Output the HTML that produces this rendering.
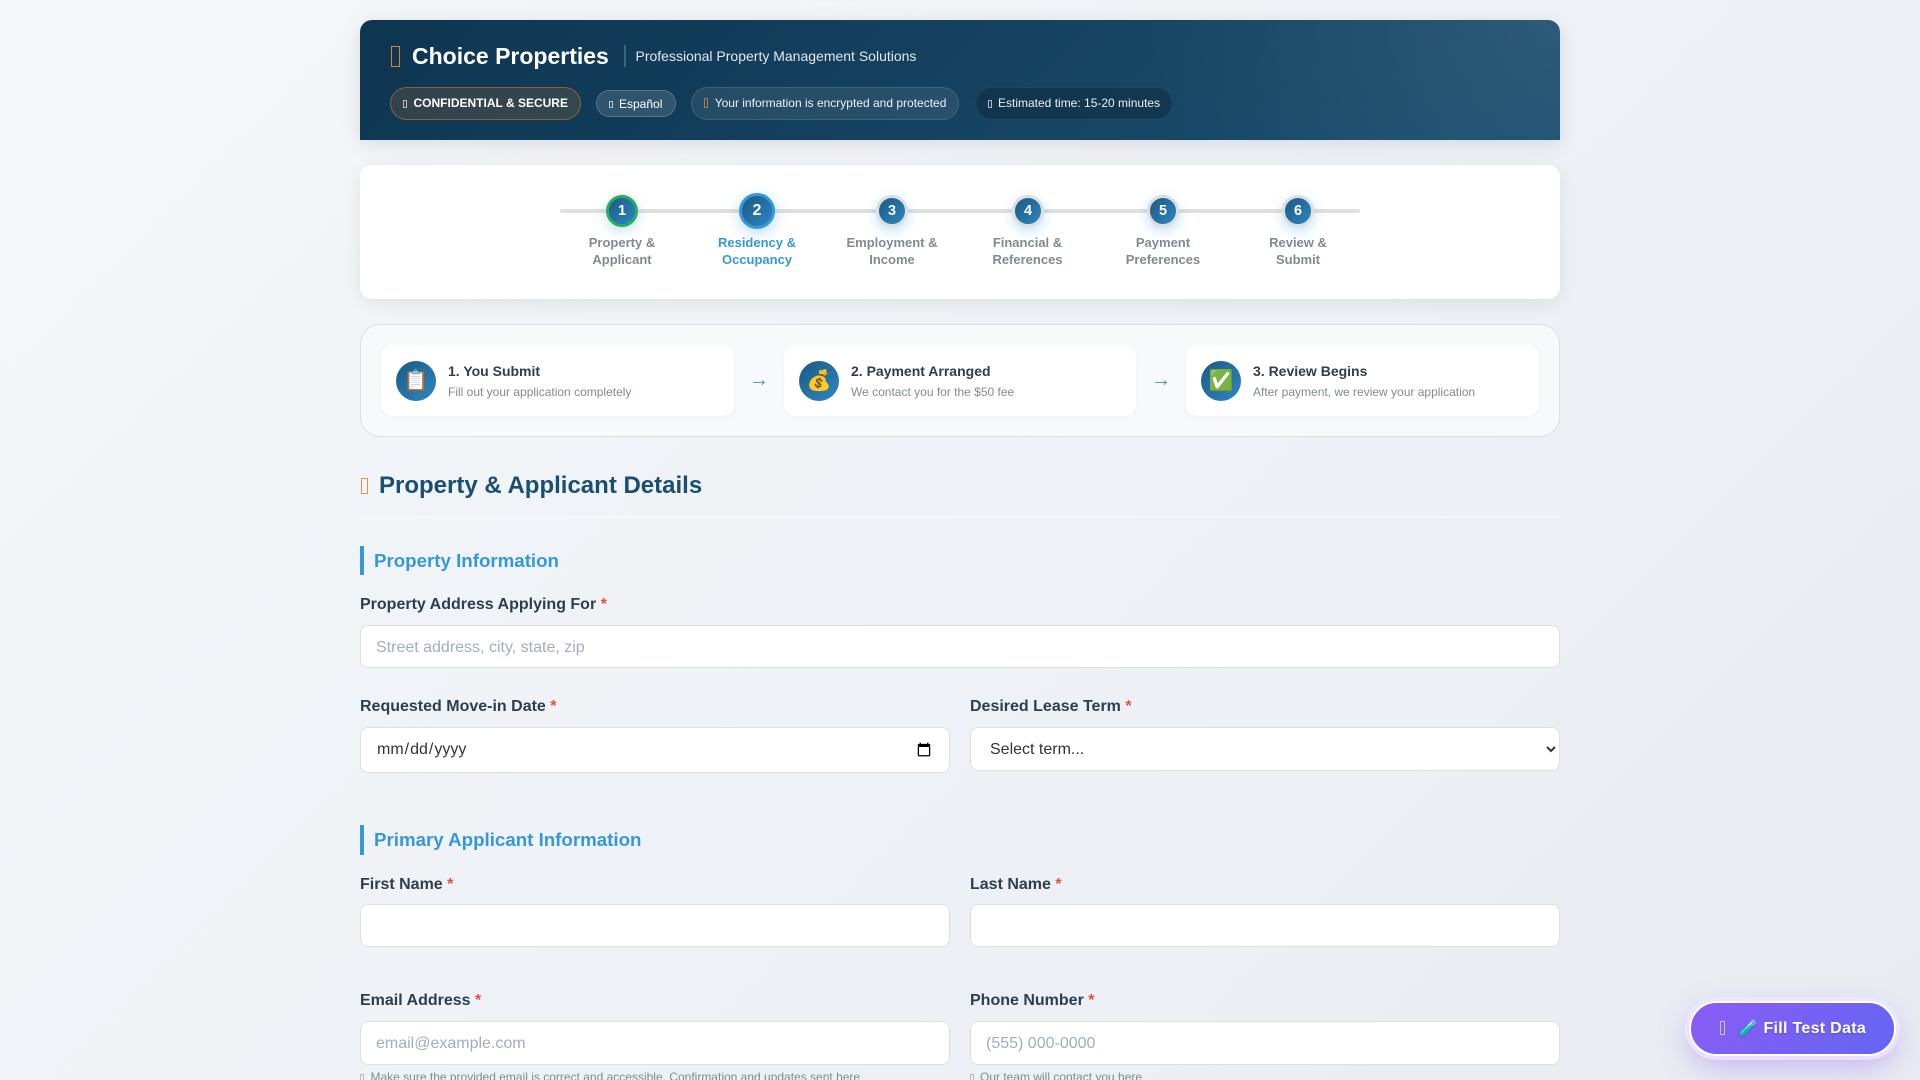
<!DOCTYPE html>
<html lang="en"><head><meta charset="utf-8"><title>Choice Properties</title>
<style>
*{box-sizing:border-box}
html,body{margin:0;padding:0;width:1920px;height:1080px;overflow:hidden}
body{position:relative;background:linear-gradient(135deg,#f5f7fa 0%,#e8ecf1 100%);font-family:"Liberation Sans",sans-serif;color:#2c3e50}
.a{position:absolute;white-space:nowrap}
.header{left:360px;top:20px;width:1200px;height:120px;border-radius:12px 12px 0 0;background:radial-gradient(ellipse 420px 260px at 100% 0,rgba(255,255,255,.08),rgba(255,255,255,0) 100%),linear-gradient(135deg,#0d3550 0%,#1c4f70 100%);box-shadow:0 4px 20px rgba(0,0,0,.1)}
.pill{border-radius:20px;border:1px solid rgba(255,255,255,.15);background:rgba(255,255,255,.1)}
.t{color:#fff;font-size:12px;line-height:16px}
.x{position:absolute;border:1px solid currentColor}
.card{left:360px;top:165px;width:1200px;height:134px;background:#fff;border-radius:12px;box-shadow:0 4px 20px rgba(0,0,0,.08)}
.line{left:560px;top:209px;width:800px;height:4px;background:#dfdfdf;border-radius:2px}
.num{width:32px;height:32px;top:195px;border-radius:50%;border:3px solid #dedede;background:linear-gradient(135deg,#1a5a85,#2e86c1);color:#fff;font-weight:700;font-size:14.4px;line-height:26px;text-align:center;box-shadow:0 4px 12px rgba(52,152,219,.3)}
.lbl{top:234px;width:124px;font-size:13px;line-height:17px;font-weight:700;color:#7f8c8d;text-align:center;white-space:normal}
.proc{left:360px;top:324px;width:1200px;height:113px;background:#f8f9fb;border:1px solid #dcdfe3;border-radius:20px}
.pc{top:345px;height:71px;background:#fff;border-radius:12px;box-shadow:0 2px 8px rgba(0,0,0,.03)}
.pi{top:361px;width:40px;height:40px;border-radius:50%;background:linear-gradient(135deg,#1a5a85,#2e86c1);font-size:20px;line-height:40px;text-align:center}
.pt{top:363px;font-size:14px;line-height:16px;font-weight:700;color:#2c3e50}
.pd{top:385px;font-size:12px;line-height:14px;color:#7f8c8d}
.arr{top:367px;font-size:20px;line-height:26px;color:#3498db}
.bar{left:360px;width:4px;background:#3498db}
.sub{left:374px;font-size:18.72px;line-height:24px;font-weight:700;color:#3498db}
label{position:absolute;white-space:nowrap;font-size:16px;line-height:20px;font-weight:700;color:#2c3e50}
label b{color:#e74c3c}
input,select{position:absolute;margin:0;background:#fff;border:1.5px solid #dfdfdf;border-radius:8px;font-family:"Liberation Sans",sans-serif;font-size:16px;padding:0 15px;color:#333;outline:none}
input::placeholder{color:#a0aec0;opacity:1}
.h{font-size:12px;line-height:14px;color:#7f8c8d}
.btn{left:1689px;top:1001px;width:207px;height:55px;border-radius:28px;border:2px solid #fff;background:linear-gradient(135deg,#8b5cf6,#6366f1);box-shadow:0 0 0 4px rgba(240,232,255,.75),0 10px 30px rgba(139,92,246,.4)}
</style></head><body>

<div class="a header"></div>
<div class="x" style="left:391px;top:46px;width:9px;height:21px;color:#e67e22"></div>
<div class="a" style="left:412px;top:42px;font-size:23px;line-height:28px;font-weight:700;color:#fff">Choice Properties</div>
<div class="a" style="left:624px;top:45px;width:2px;height:22px;background:rgba(255,255,255,.2)"></div>
<div class="a" style="left:635.5px;top:47px;font-size:14px;line-height:18px;color:rgba(255,255,255,.88)">Professional Property Management Solutions</div>

<div class="a pill" style="left:390px;top:87px;width:191px;height:33px;background:rgba(230,126,34,.17);border-color:rgba(230,126,34,.5)"></div>
<div class="x" style="left:403px;top:100px;width:4px;height:8px;color:#b8bcbd"></div>
<div class="a t" style="left:413.5px;top:95px;font-weight:700">CONFIDENTIAL &amp; SECURE</div>

<div class="a pill" style="left:596px;top:90px;width:80px;height:27px;background:rgba(255,255,255,.13);border-color:rgba(255,255,255,.2)"></div>
<div class="x" style="left:609px;top:101px;width:4px;height:7px;color:#b5c0c8"></div>
<div class="a t" style="left:619px;top:96px">Español</div>

<div class="a pill" style="left:691px;top:87px;width:268px;height:33px;background:rgba(255,255,255,.08);border-color:rgba(255,255,255,.12)"></div>
<div class="x" style="left:704px;top:98px;width:4px;height:10px;color:#b27a4a"></div>
<div class="a t" style="left:714.7px;top:95px;color:rgba(255,255,255,.92)">Your information is encrypted and protected</div>

<div class="a pill" style="left:974.5px;top:87px;width:198px;height:33px;background:rgba(0,0,0,.2);border-color:rgba(255,255,255,.08)"></div>
<div class="x" style="left:988px;top:100px;width:4px;height:8px;color:#b0bac0"></div>
<div class="a t" style="left:998px;top:95px;color:rgba(255,255,255,.92)">Estimated time: 15-20 minutes</div>

<div class="a card"></div>
<div class="a line"></div>
<div class="a num" style="left:606px;border-color:#27ae60">1</div>
<div class="a num" style="left:739px;top:193px;width:36px;height:36px;border-color:#3498db;font-size:16px;line-height:30px;box-shadow:0 4px 14px rgba(52,152,219,.35)">2</div>
<div class="a num" style="left:876px">3</div>
<div class="a num" style="left:1012px">4</div>
<div class="a num" style="left:1147px">5</div>
<div class="a num" style="left:1282px">6</div>
<div class="a lbl" style="left:560px">Property &amp;<br>Applicant</div>
<div class="a lbl" style="left:695px;color:#3498db">Residency &amp;<br>Occupancy</div>
<div class="a lbl" style="left:830px">Employment &amp;<br>Income</div>
<div class="a lbl" style="left:965.5px">Financial &amp;<br>References</div>
<div class="a lbl" style="left:1101px">Payment<br>Preferences</div>
<div class="a lbl" style="left:1236px">Review &amp;<br>Submit</div>

<div class="a proc"></div>
<div class="a pc" style="left:381px;width:353px"></div>
<div class="a pc" style="left:784px;width:352px"></div>
<div class="a pc" style="left:1186px;width:353px"></div>
<div class="a pi" style="left:396px">📋</div>
<div class="a pi" style="left:799px">💰</div>
<div class="a pi" style="left:1201px">✅</div>
<div class="a pt" style="left:448px">1. You Submit</div>
<div class="a pd" style="left:448px">Fill out your application completely</div>
<div class="a pt" style="left:851px">2. Payment Arranged</div>
<div class="a pd" style="left:851px">We contact you for the $50 fee</div>
<div class="a pt" style="left:1253px">3. Review Begins</div>
<div class="a pd" style="left:1253px">After payment, we review your application</div>
<div class="a arr" style="left:749px">→</div>
<div class="a arr" style="left:1151px">→</div>

<div class="x" style="left:360.5px;top:478px;width:7px;height:16px;color:#e4934a"></div>
<div class="a" style="left:379px;top:471px;font-size:24px;line-height:30px;font-weight:700;color:#1a4f72">Property &amp; Applicant Details</div>
<div class="a" style="left:360px;top:516px;width:1200px;height:2px;background:#f6f7f9"></div>

<div class="a bar" style="top:546px;height:29px"></div>
<div class="a sub" style="top:549px">Property Information</div>
<label style="left:360px;top:594.5px">Property Address Applying For <b>*</b></label>
<input style="left:360px;top:625px;width:1200px;height:43px;padding-top:2px" placeholder="Street address, city, state, zip">

<label style="left:360px;top:697px">Requested Move-in Date <b>*</b></label>
<input type="date" style="left:360px;top:727px;width:590px;height:46px">
<label style="left:970px;top:697px">Desired Lease Term <b>*</b></label>
<select style="left:970px;top:727px;width:590px;height:44px"><option>Select term...</option></select>

<div class="a bar" style="top:825px;height:30px"></div>
<div class="a sub" style="top:828px">Primary Applicant Information</div>

<label style="left:360px;top:875px">First Name <b>*</b></label>
<input style="left:360px;top:904px;width:590px;height:43px">
<label style="left:970px;top:875px">Last Name <b>*</b></label>
<input style="left:970px;top:904px;width:590px;height:43px">

<label style="left:360px;top:990.5px">Email Address <b>*</b></label>
<input style="left:360px;top:1021px;width:590px;height:43.5px;padding-top:2px" placeholder="email@example.com">
<label style="left:970px;top:990.5px">Phone Number <b>*</b></label>
<input style="left:970px;top:1021px;width:590px;height:43.5px;padding-top:2px" placeholder="(555) 000-0000">
<div class="x" style="left:360px;top:1074px;width:4px;height:8px;color:#b3b9bd"></div>
<div class="a h" style="left:370.5px;top:1070px">Make sure the provided email is correct and accessible. Confirmation and updates sent here</div>
<div class="x" style="left:970px;top:1074px;width:4px;height:8px;color:#b3b9bd"></div>
<div class="a h" style="left:980px;top:1070px">Our team will contact you here</div>

<div class="a btn"></div>
<div class="x" style="left:1720px;top:1021px;width:5px;height:14px;color:rgba(255,255,255,.6)"></div>
<div class="a" style="left:1738.5px;top:1019px;font-size:16px;line-height:20px;font-weight:700;letter-spacing:.3px;color:#fff;text-shadow:0 1px 2px rgba(0,0,0,.2)">🧪 Fill Test Data</div>

</body></html>
